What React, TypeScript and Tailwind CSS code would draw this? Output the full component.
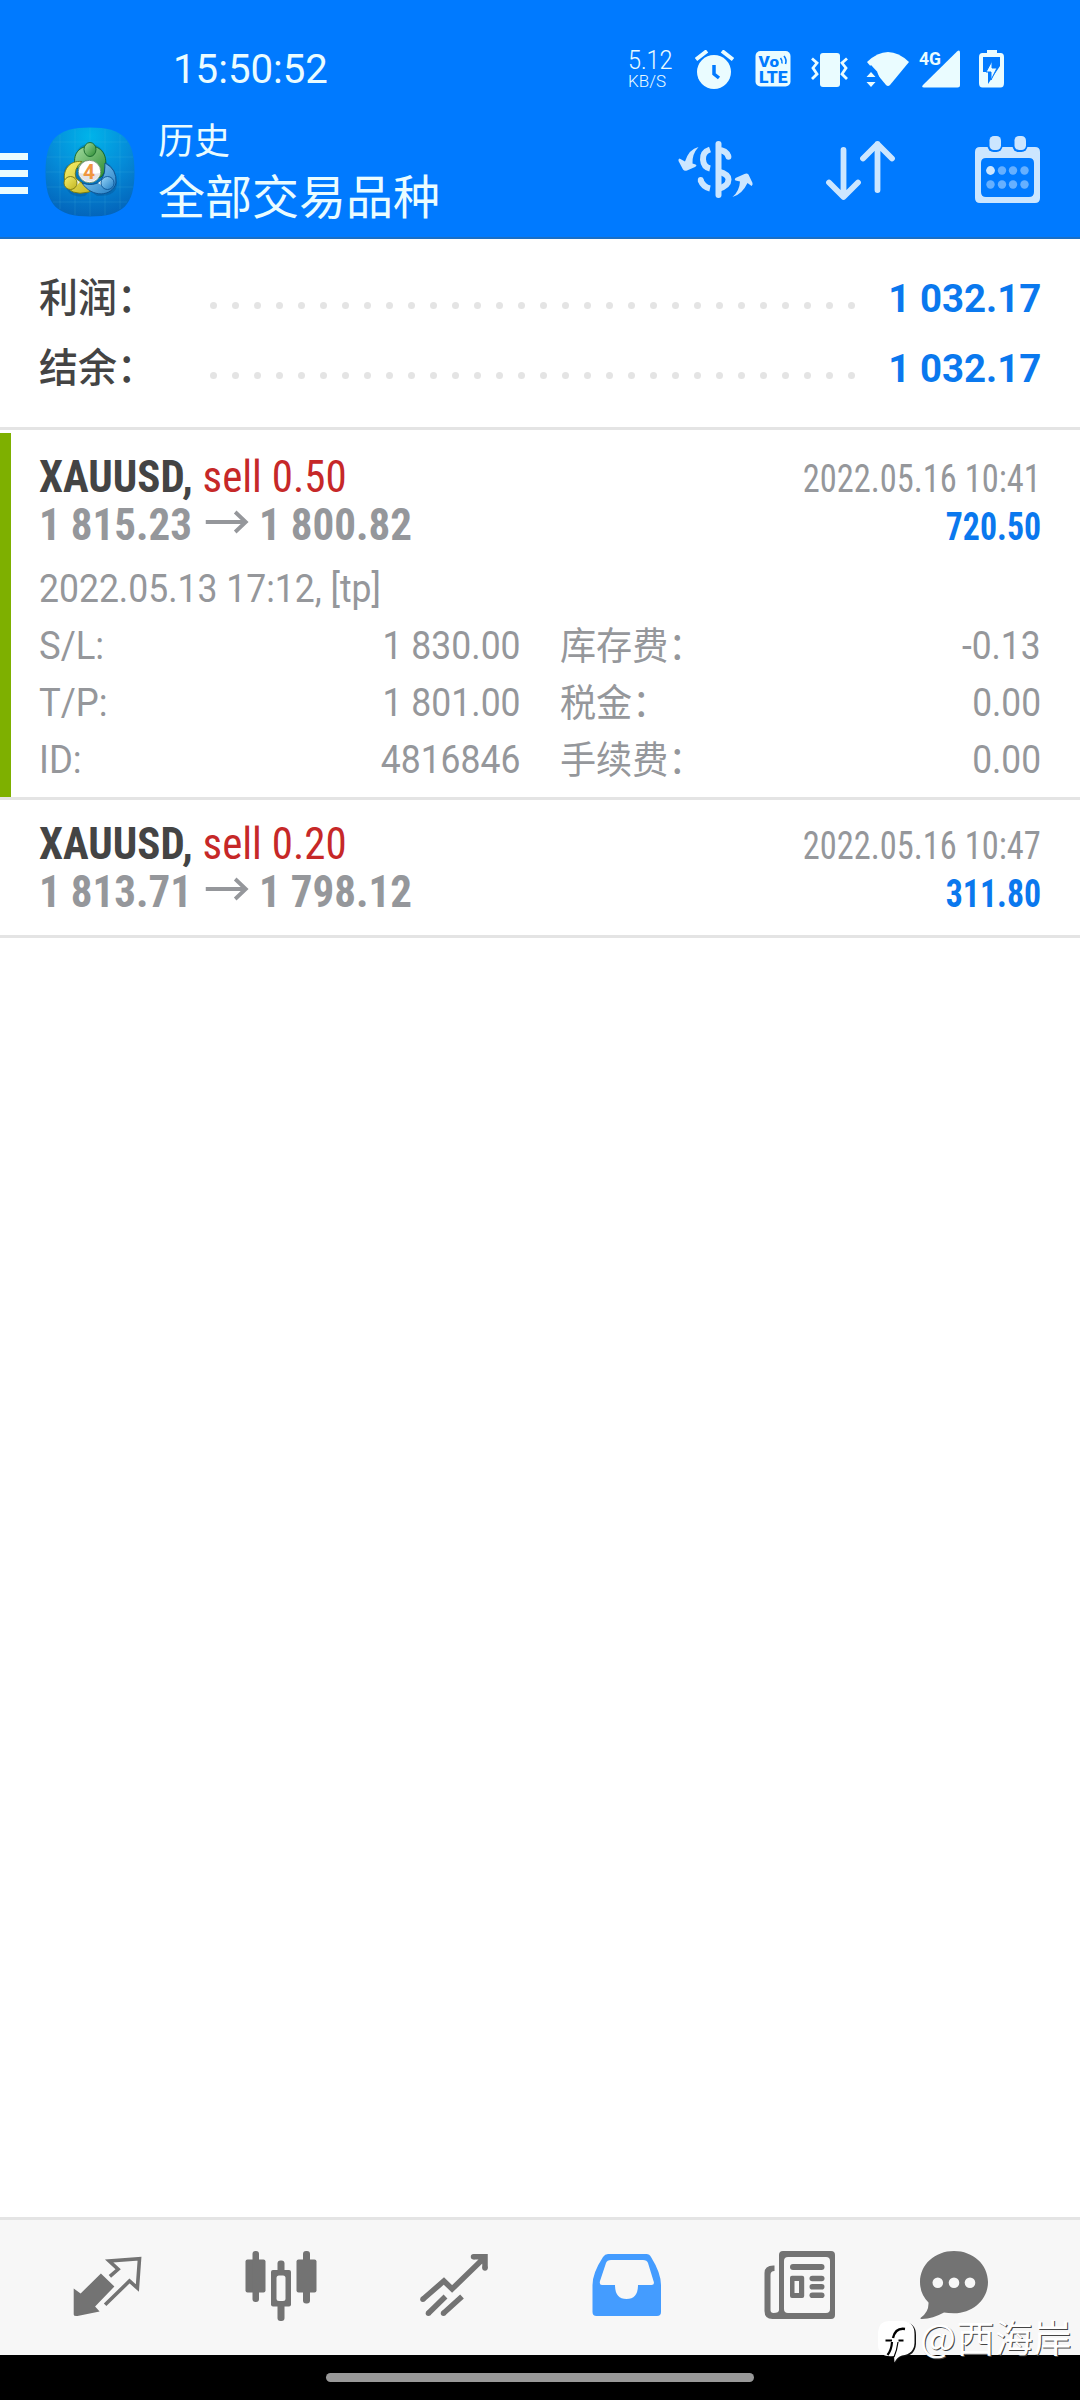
import type { ReactNode } from "react";

type Deal = {
  symbol: string;
  side: string;
  open: string;
  close: string;
  time: string;
  profit: string;
  opened?: string;
  details?: string[][];
};

const TOTALS = [
  { label: "利润：", value: "1 032.17" },
  { label: "结余：", value: "1 032.17" },
];

const DEALS: Deal[] = [
  {
    symbol: "XAUUSD,",
    side: "sell 0.50",
    open: "1 815.23",
    close: "1 800.82",
    time: "2022.05.16 10:41",
    profit: "720.50",
    opened: "2022.05.13 17:12, [tp]",
    details: [
      ["S/L:", "1 830.00", "库存费：", "-0.13"],
      ["T/P:", "1 801.00", "税金：", "0.00"],
      ["ID:", "4816846", "手续费：", "0.00"],
    ],
  },
  {
    symbol: "XAUUSD,",
    side: "sell 0.20",
    open: "1 813.71",
    close: "1 798.12",
    time: "2022.05.16 10:47",
    profit: "311.80",
  },
];

function StatusBar() {
  return (
    <div className="flex h-[110px] items-start pt-[50px] pl-[173px] text-[#eafcff]">
      <span className="-mt-[6px] w-[455px] origin-left scale-x-[0.98] text-[41px] leading-[50px] font-[370] whitespace-nowrap">15:50:52</span>
      <div className="w-[67px] whitespace-nowrap">
        <p className="-mt-[2px] origin-left scale-x-[0.9] text-[26px] leading-[24px] font-[350]">5.12</p>
        <p className="mt-px text-[17px] leading-[17px] font-[350]">KB/S</p>
      </div>
      <svg className="h-[40px] w-[40px]" viewBox="0 0 40 40">
        <circle cx="19" cy="22" r="17" fill="currentColor" />
        <path d="M1 9.500 12 1M27 1 38 9.500" stroke="currentColor" strokeWidth="4" />
        <path d="M19 15v9l5 4" fill="none" stroke="#007aff" strokeWidth="3.500" />
      </svg>
      <svg className="ml-[20px] h-[38px] w-[37px]" viewBox="0 0 37 38" fontFamily="Roboto, sans-serif" fontWeight="900">
        <rect x="0.500" y="1" width="35" height="35.500" rx="5" fill="currentColor" />
        <text x="3.500" y="16.500" fontSize="15.500" textLength="20.500" lengthAdjust="spacingAndGlyphs" fill="#007aff">
          Vo
        </text>
        <text x="4" y="32.500" fontSize="16.500" textLength="28.500" lengthAdjust="spacingAndGlyphs" fill="#007aff">
          LTE
        </text>
        <path d="M25.500 8q2 2.500 1.500 5.500M29 6q3 3.500 1.500 8" fill="none" stroke="#007aff" strokeWidth="1.600" />
      </svg>
      <svg className="ml-[19px] h-[38px] w-[38px]" viewBox="0 0 38 38">
        <rect x="9" y="3" width="20" height="34" rx="3" fill="currentColor" />
        <path d="M1 8.500 6 13 2 18 6 24 1 29M36 8.500 31 13 35 18 31 24 36 29" fill="none" stroke="currentColor" strokeWidth="2.800" />
      </svg>
      <svg className="ml-[17px] h-[38px] w-[44px]" viewBox="0 0 44 38">
        <path d="M1 12Q22-8 43 12L24 35q-2 2-4 0Z" fill="currentColor" />
        <path d="M-1 21.500 5 15 11 21.500 14 29 9 37H-1Z" fill="#007aff" />
        <path d="M.5 27 5 22 9.500 27ZM.5 32 5 37 9.500 32Z" fill="currentColor" />
      </svg>
      <svg className="ml-[9px] h-[38px] w-[42px] overflow-visible" viewBox="0 0 42 38">
        <path d="M38 1.500Q41-1 41 3V35q0 2.500-2.500 2.500H5q-3 0-1-2.500Z" fill="currentColor" />
        <text x="0" y="14.500" fontSize="18.500" fontWeight="700" fontFamily="Roboto, sans-serif" textLength="22" lengthAdjust="spacingAndGlyphs" fill="currentColor">
          4G
        </text>
      </svg>
      <svg className="ml-[18px] h-[38px] w-[26px]" viewBox="0 0 26 38">
        <path d="M8 0h10v3h3.500Q25 3 25 7v26q0 4.500-3.500 4.500h-18Q0 37.500 0 33V7Q0 3 3.500 3H8Z" fill="currentColor" />
        <path d="M4 7h17v9L9 34V22H4Z" fill="#007aff" />
        <path d="M13 11v7h5L12 30v-8H7Z" fill="currentColor" stroke="#007aff" strokeWidth="1" />
      </svg>
    </div>
  );
}

function AppLogo() {
  return (
    <svg className="h-[90px] w-[90px]" viewBox="0 0 90 90">
      <defs>
        <radialGradient id="tile" cx="0.5" cy="0.1" r="0.95">
          <stop offset="0" stopColor="#00b4ea" />
          <stop offset="0.5" stopColor="#058bd8" />
          <stop offset="1" stopColor="#0361b8" />
        </radialGradient>
        <linearGradient id="green" x1="0" y1="0" x2="1" y2="1">
          <stop offset="0" stopColor="#a4dca0" />
          <stop offset="1" stopColor="#2a8a30" />
        </linearGradient>
        <linearGradient id="yellow" x1="0" y1="0" x2="1" y2="1">
          <stop offset="0" stopColor="#f6ef6a" />
          <stop offset="1" stopColor="#c2b423" />
        </linearGradient>
        <linearGradient id="blue" x1="0" y1="0" x2="1" y2="1">
          <stop offset="0" stopColor="#9ad8fa" />
          <stop offset="1" stopColor="#1f7cc4" />
        </linearGradient>
      </defs>
      <path d="M45 .5C78 .5 89.500 12 89.500 45S78 89.500 45 89.500 .5 78 .5 45 12 .5 45 .5Z" fill="url(#tile)" />
      <path
        d="M15 8v74M30 2v86M45 1v88M60 2v86M75 8v74M8 15h74M2 30h86M1 45h88M2 60h86M8 75h74"
        stroke="#5cc8ee"
        strokeOpacity="0.15"
        strokeWidth="1"
      />
      <path d="M30 36Q16 36 19 54T40 69L45 64 52 69Q72 70 72 56T61 35Q60 18 45 17T30 36Z" fill="#06477f" fillOpacity="0.3" />
      <g strokeWidth="0.900">
        <path d="M31 41C26 27 35 19 45 19S65 27 59 46Q56 52 52 50Q56 37 45 34Q36 33 35 41Z" fill="url(#green)" stroke="#12631f" />
        <path d="M37 34.500C24 33 17 44 20 55Q24 70 44 65L50 61Q40 60 31 51Q28 42 37 34.500Z" fill="url(#yellow)" stroke="#6d7510" />
        <path d="M60 36Q72 42 71 56C67 70 47 71 37 56Q48 60 56 54Q61 46 60 36Z" fill="url(#blue)" stroke="#0b4f8e" />
        <path d="M30 52l5 3-4 4zM58 52l-5 4 5 3z" fill="#eef5f3" />
        <ellipse cx="45" cy="22.500" rx="6" ry="7" fill="url(#green)" stroke="#15672a" />
        <circle cx="25.500" cy="56" r="6.500" fill="url(#yellow)" stroke="#777612" />
        <circle cx="62.500" cy="56" r="6.500" fill="url(#blue)" stroke="#0d5594" />
      </g>
      <circle cx="44.500" cy="44.500" r="11.200" fill="#fff" stroke="#6c8d6a" strokeWidth="0.800" />
      <path d="M33.800 46a11 11 0 0 0 21.400 0Q45 48 33.800 46Z" fill="#e3e3e8" />
      <text x="44" y="52" textAnchor="middle" fontSize="21" fontWeight="700" fontFamily="Roboto, sans-serif" fill="#f0963f">
        4
      </text>
    </svg>
  );
}

function Header() {
  return (
    <header className="h-[239px] border-b-2 border-[#1a6fc6] bg-[#007aff]">
      <StatusBar />
      <div className="flex h-[127px] items-start">
        <div className="mt-[43px] flex w-[28px] flex-col gap-[10px]">
          <span className="h-[7px] bg-[#eafcff]" />
          <span className="h-[7px] bg-[#eafcff]" />
          <span className="h-[7px] bg-[#eafcff]" />
        </div>
        <div className="mt-[17px] ml-[17px]">
          <AppLogo />
        </div>
        <div className="ml-[23px] w-[519px] font-['Noto_Sans_CJK_SC',sans-serif] text-[#eafcff]">
          <p className="mt-[6px] text-[36px] leading-[44px]">历史</p>
          <p className="mt-[5px] text-[47px] leading-[58px]">全部交易品种</p>
        </div>
        <svg className="mt-[30px] h-[59px] w-[77px] text-[#cce6ff]" viewBox="0 0 77 59" fill="none" stroke="currentColor">
          <path d="M41.500 4v51" strokeWidth="6" strokeLinecap="round" />
          <path d="M33 9.500Q25.500 12 26 19.500T33 28.500M23.500 40Q26 47 33 48.500M41 10Q49 10 51.500 16.500" strokeWidth="6" />
          <path d="M41 31.500Q51.500 34 51.500 39.500Q51.500 46 41 49" strokeWidth="6" />
          <circle cx="51.500" cy="16.800" r="2.900" fill="currentColor" stroke="none" />
          <circle cx="23.700" cy="40" r="2.900" fill="currentColor" stroke="none" />
          <g fill="currentColor" stroke="none">
            <path d="M21.500 7Q12 9 8 21.500L2.500 18.500Q1 19 1.500 21L6 29.500Q7.500 31.500 10 30.500L18 27Q20.500 25.500 18.500 24.500L15.500 23.500Q15 14 21.500 7Z" />
            <path d="M55.500 57Q65 54.500 70.500 43L74.500 46Q76 45 75.500 43L71.500 34.500Q70 33 67.500 34L58.500 38Q57 39.500 58.500 40.500L63 41.500Q62.500 51 55.500 57Z" />
          </g>
        </svg>
        <svg className="mt-[30px] ml-[70px] h-[62px] w-[72px] text-[#cce6ff]" viewBox="0 0 72 62" fill="none" stroke="currentColor" strokeWidth="5.800" strokeLinecap="round" strokeLinejoin="round">
          <path d="M19.500 10v46M5 42.500 19.500 57 34 42.500M53.500 50V4M39 18.500 53.500 4 68 18.500" />
        </svg>
        <svg className="mt-[26px] ml-[79px] h-[68px] w-[67px] text-[#cce6ff]" viewBox="0 0 67 68" fill="currentColor">
          <path
            fillRule="evenodd"
            d="M5 11H60q5 0 5 5V62q0 5-5 5H5q-5 0-5-5V16q0-5 5-5ZM11 22q-5 0-5 5V56q0 5 5 5H54q5 0 5-5V27q0-5-5-5Z"
          />
          <rect x="12.500" y="-2" width="15" height="18" rx="6" fill="#007aff" />
          <rect x="37.500" y="-2" width="15" height="18" rx="6" fill="#007aff" />
          <rect x="14.500" y="0" width="11.500" height="14" rx="4.500" />
          <rect x="39.500" y="0" width="11.500" height="14" rx="4.500" />
          <circle cx="15.500" cy="34.500" r="4.400" />
          <g opacity="0.5">
            <circle cx="27" cy="34.500" r="4.200" />
            <circle cx="38" cy="34.500" r="4.200" />
            <circle cx="49.500" cy="34.500" r="4.200" />
            <circle cx="15.500" cy="48.500" r="4.200" />
            <circle cx="27" cy="48.500" r="4.200" />
            <circle cx="38" cy="48.500" r="4.200" />
            <circle cx="49.500" cy="48.500" r="4.200" />
          </g>
        </svg>
      </div>
    </header>
  );
}

function Totals() {
  return (
    <section className="border-b-3 border-[#e4e4e4] pt-[25px] pr-[39px] pb-[23px] pl-[39px]">
      {TOTALS.map((t) => (
        <div key={t.label} className="flex h-[70px] items-center">
          <span className="w-[171px] origin-left scale-x-[0.975] text-[40px] leading-[70px] font-medium text-[#444444]">{t.label}</span>
          <span className="flex gap-[15px] pt-[12px]">
            {Array.from({ length: 30 }).map((_, i) => (
              <i key={i} className="h-[7px] w-[7px] rounded-full bg-[#e4e4e4]" />
            ))}
          </span>
          <span className="ml-auto origin-right scale-x-[0.985] text-[39px] leading-[70px] font-bold text-[#0a78ee]">{t.value}</span>
        </div>
      ))}
    </section>
  );
}

function Arrow() {
  return (
    <svg className="mr-[10px] ml-[14px] inline-block h-[24px] w-[46px] align-[6px]" viewBox="0 0 46 24" fill="none" stroke="currentColor" strokeWidth="4">
      <path d="M0 12H42M31 2 42 12 31 22" />
    </svg>
  );
}

function DealRow({ deal }: { deal: Deal }) {
  return (
    <article className={deal.details ? "mt-[3px] h-[367px] border-b-3 border-[#e4e4e4]" : "h-[138px] border-b-3 border-[#e4e4e4]"}>
      <div className={deal.details ? "h-full border-l-11 border-[#7eb000] pt-[20px] pr-[39px] pl-[28px]" : "pt-[20px] pr-[39px] pl-[39px]"}>
        <div className="flex h-[48px] items-baseline justify-between font-['Roboto_Condensed',Roboto,sans-serif] font-stretch-condensed">
          <p className="origin-left scale-x-[0.954] text-[45px] leading-[48px] whitespace-nowrap">
            <b className="text-[#444444]">{deal.symbol}</b> <span className="text-[#c62828]">{deal.side}</span>
          </p>
          <p className="origin-right scale-x-[0.906] text-[38px] leading-[48px] text-[#95979b]">{deal.time}</p>
        </div>
        <div className="flex h-[48px] items-baseline justify-between font-['Roboto_Condensed',Roboto,sans-serif] font-bold font-stretch-condensed">
          <p className="origin-left scale-x-[0.957] text-[45px] leading-[48px] whitespace-nowrap text-[#95979b]">
            {deal.open}
            <Arrow />
            {deal.close}
          </p>
          <p className="origin-right scale-x-[0.89] text-[38px] leading-[48px] text-[#0a78ee]">{deal.profit}</p>
        </div>
        {deal.details && (
          <div className="mt-[12px] text-[38px] leading-[57px] text-[#95979b]">
            <p className="origin-left scale-x-[0.935]">{deal.opened}</p>
            {deal.details.map(([a, b, c, d]) => (
              <div key={a} className="grid grid-cols-2 gap-x-[39px]">
                <p className="flex justify-between">
                  <span className="origin-left scale-x-[0.96]">{a}</span>
                  <span className="origin-right scale-x-[0.935]">{b}</span>
                </p>
                <p className="flex justify-between">
                  <span className="origin-left scale-x-[0.95]">{c}</span>
                  <span className="origin-right scale-x-[0.93]">{d}</span>
                </p>
              </div>
            ))}
          </div>
        )}
      </div>
    </article>
  );
}

function Tab({ children, last }: { children: ReactNode; last?: boolean }) {
  return (
    <div className={last ? "flex w-[136px] justify-center" : "flex w-[173px] justify-center"}>
      <svg className="h-[72px] w-[72px]" viewBox="0 0 72 72" fill="currentColor">
        {children}
      </svg>
    </div>
  );
}

function TabBar() {
  return (
    <nav className="flex h-[138px] border-t-3 border-[#e4e4e4] bg-[#f7f7f7] pt-[30px] pl-[21px] text-[#737373]">
      <Tab>
        <path d="M1.700 38.500 8.600 43.500 28.900 23.500 42.400 36.500 23.100 56.500 27.600 61.500 5.500 66Q1.700 66.500 1.700 64.500Z" />
        <path d="M37.900 26.300 46.100 19.300 37.200 11 67.500 8.800 65.400 38 57.500 31 33.100 54.800" fill="none" stroke="currentColor" strokeWidth="3.600" />
      </Tab>
      <Tab>
        <rect x="0.500" y="9.500" width="20" height="33" rx="2" />
        <rect x="7.500" y="1" width="6.500" height="51" rx="3" />
        <rect x="26" y="20" width="20" height="36.500" rx="2" />
        <rect x="32.500" y="10.500" width="7" height="60.500" rx="3" />
        <rect x="31.500" y="25.500" width="9" height="25.500" rx="2.500" fill="#f7f7f7" />
        <rect x="51.500" y="9.500" width="20" height="33" rx="2" />
        <rect x="58" y="1" width="7" height="52.500" rx="3" />
      </Tab>
      <Tab>
        <g fill="none" stroke="currentColor" strokeWidth="5.500">
          <path d="M4.900 49.300 25.900 31 34.100 39 66 8M55.500 6.800H67V18.500" />
          <path d="M10.400 63.300 27.500 46.500M25.500 63.300 44 46.500" />
        </g>
        <circle cx="4.900" cy="49.300" r="2.700" />
        <circle cx="10.400" cy="63.300" r="2.700" />
        <circle cx="25.500" cy="63.300" r="2.700" />
        <circle cx="55.500" cy="6.800" r="2.700" />
        <circle cx="67" cy="18" r="2.700" />
      </Tab>
      <Tab>
        <path
          fill="#449cff"
          fillRule="evenodd"
          d="M17 4H55.500q3 0 4.500 3Q70 23 70 35V62q0 4-4 4H5.500q-4 0-4-4V35Q1.500 23 12 7q2-3 5-3ZM20 10q-4 0-5 3L9 31q-1 4 2 4H24Q24 49 35.500 49T47 35H60.500q3.500 0 2-4L57 13q-1-3-5-3Z"
        />
      </Tab>
      <Tab>
        <path
          fillRule="evenodd"
          d="M19 1H67q4 0 4 4V65q0 4-4 4H8.500Q.5 69 .5 61V23q0-8 10-7.500v5.500q-4 0-4 4V60q0 3 3 3 5.500 0 5.500-3V5q0-4 4-4ZM24 7q-4 0-4 4V59q0 4 4 4H62q4 0 4-4V11q0-4-4-4Z"
        />
        <rect x="26" y="14" width="34.500" height="6" rx="3" />
        <path fillRule="evenodd" d="M28 25.700h10.200q2 0 2 2V46q0 2-2 2H28q-2 0-2-2V27.700q0-2 2-2ZM30.500 31v12H35V31Z" />
        <rect x="45.500" y="25.700" width="15" height="5.600" rx="2.800" />
        <rect x="45.500" y="34" width="15" height="5.600" rx="2.800" />
        <rect x="45.500" y="42.400" width="15" height="5.600" rx="2.800" />
      </Tab>
      <Tab last>
        <path d="M36 1C55 1 70 14.500 70 32S55 63.300 36 63.300Q30 63.300 26 62.500 15 68.500 4 69 1.500 69 3 67.500 11 62 10.500 52.500 2 44 2 32C2 14.500 17 1 36 1Z" />
        <g fill="#f7f7f7">
          <circle cx="19.800" cy="32.700" r="5.300" />
          <circle cx="36" cy="32.700" r="5.300" />
          <circle cx="52" cy="32.700" r="5.300" />
        </g>
      </Tab>
    </nav>
  );
}

function Watermark() {
  return (
    <div className="absolute right-[8px] bottom-[36px] flex h-[44px] items-start text-white">
      <svg className="h-[44px] w-[40px]" viewBox="0 0 40 44">
        <path d="M13 2H27Q39 3 39 15V24Q38 36 26 36.500Q22 36.500 18.500 43L16 36Z" fill="#111" />
        <path d="M12 1H26Q37.500 2 37.500 14V23Q37 34 25 35.500Q20 37 17.500 42.500L17 36Q1 38 1 24V12Q2 1 12 1Z" fill="#fff" />
        <path d="M28 9Q18.500 7.500 16 18" fill="none" stroke="#000" strokeWidth="2.400" />
        <path d="M8.500 20.500H15M21.500 20.500H26.500M15 22Q14.500 30 10.500 35" fill="none" stroke="#000" strokeWidth="2.200" />
        <path d="M21 22Q20 30 17 37" fill="none" stroke="#000" strokeWidth="1.200" />
      </svg>
      <span className="-mt-[6px] ml-[3px] font-['Noto_Sans_CJK_SC',sans-serif] text-[38px] leading-[44px] tracking-[0.5px] [text-shadow:1px_1px_0_#444]">@西海岸</span>
    </div>
  );
}

export default function App() {
  return (
    <div className="relative flex h-[2400px] w-[1080px] flex-col overflow-hidden bg-white font-[Roboto,'Noto_Sans_CJK_SC',sans-serif]">
      <Header />
      <main className="flex-1">
        <Totals />
        {DEALS.map((d) => (
          <DealRow key={d.time} deal={d} />
        ))}
      </main>
      <TabBar />
      <div className="flex h-[45px] justify-center bg-black pt-[18px]">
        <span className="h-[9px] w-[428px] rounded-full bg-[#999999]" />
      </div>
      <Watermark />
    </div>
  );
}
